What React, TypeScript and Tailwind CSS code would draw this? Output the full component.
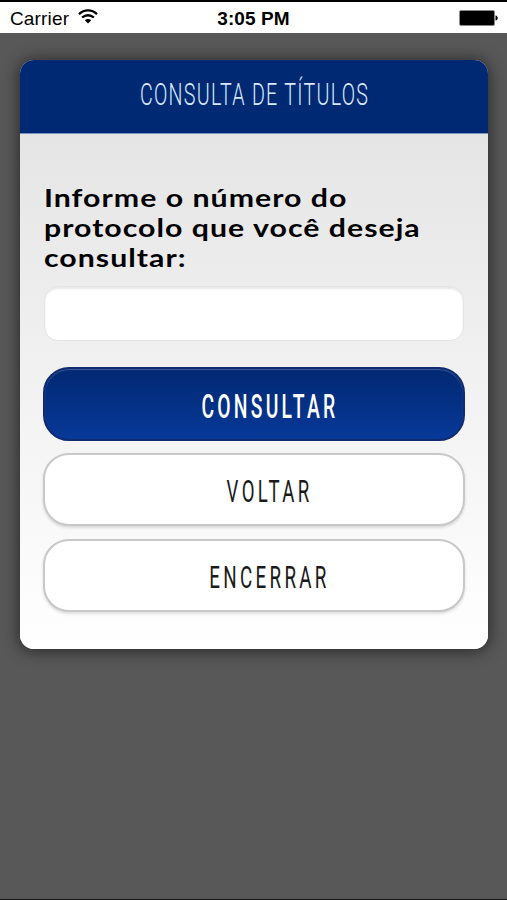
import clsx from 'clsx'

const label = ['Informe o número do', 'protocolo que você deseja', 'consultar:']

const actions = [
  {
    text: 'CONSULTAR',
    box: 'h-[74px] mb-3 border-[#102b70] bg-linear-to-b from-[#022872] to-[#073999] text-white shadow-[inset_0_1px_1px_#3d5d9b]',
    type: 'pt-px text-[33px] font-medium tracking-[5.5px] scale-x-[0.585]',
  },
  {
    text: 'VOLTAR',
    box: 'h-[73px] mb-[13px] border-[#c8c8c8] bg-white text-[#1a1a1a] shadow-[0_2px_3px_#00000020]',
    type: 'text-[31px] font-normal tracking-[5.5px] scale-x-[0.6]',
  },
  {
    text: 'ENCERRAR',
    box: 'h-[73px] border-[#c8c8c8] bg-white text-[#1a1a1a] shadow-[0_2px_3px_#00000020]',
    type: 'text-[31px] font-normal tracking-[5.5px] scale-x-[0.605]',
  },
] as const

function StatusBar() {
  return (
    <div className="h-[33px] shrink-0 grid grid-cols-3 items-center border-t-2 border-black bg-white px-[10px] font-['Liberation_Sans',sans-serif] text-black">
      <div className="flex items-center gap-[9px]">
        <span className="pt-0.5 text-[19px] leading-none tracking-[0.15px]">Carrier</span>
        <svg className="-mt-0.5" width="20" height="15" viewBox="0 0 20 15" fill="none" stroke="currentColor" strokeWidth="2.3">
          <path d="M1 5.1C6.2.2 13.8.2 19 5.1" />
          <path d="M4.1 8.5c3.4-3 8.4-3 11.8 0" />
          <path d="M10 14.6 6.8 11.2c1.8-1.6 4.6-1.6 6.4 0Z" fill="currentColor" stroke="none" />
        </svg>
      </div>
      <span className="justify-self-center pt-0.5 text-[19px] leading-none font-bold tracking-[0.1px]">
        3:05 PM
      </span>
      <svg className="-mr-px justify-self-end" width="39" height="16" viewBox="0 0 39 16">
        <rect x=".5" y=".5" width="35" height="15" rx="1.5" fill="black" stroke="#888" />
        <path d="M36.5 5.5c3 .5 3 4.5 0 5Z" fill="black" />
      </svg>
    </div>
  )
}

export default function App() {
  return (
    <div className="h-[900px] w-[507px] flex flex-col overflow-hidden border-b border-[#171717] bg-[#585858]">
      <StatusBar />
      <main className="mt-[27px] ml-5 h-[589px] w-[468px] shrink-0 flex flex-col overflow-hidden rounded-[14px] bg-white shadow-[0_1px_15px_2px_#00000080]">
        <header className="h-[73px] shrink-0 flex items-center justify-center bg-[#002973] pb-1 pl-px font-[Roboto,sans-serif] text-[#dce8ff]">
          <h1 className="scale-x-[0.635] text-[31px] leading-none font-[350] tracking-[2px] whitespace-nowrap">
            CONSULTA DE TÍTULOS
          </h1>
        </header>
        <form className="flex-1 border-t border-[#7892be] bg-linear-to-b from-[#e5e5e5] to-white px-[23px] pt-12">
          <label htmlFor="protocolo" className="block pl-px font-[Lato,sans-serif] text-[25px] leading-[30px] font-bold text-black">
            {label.map((line) => (
              <span key={line} className="block origin-left scale-x-[1.21] tracking-[0.85px] whitespace-nowrap">
                {line}
              </span>
            ))}
          </label>
          <input
            id="protocolo"
            className="mx-px mt-[14px] block h-[55px] w-[420px] rounded-[14px] border border-[#e4e4e4] bg-white shadow-[inset_0_2px_2px_#00000018] outline-none"
          />
          <div className="mt-[26px] w-[422px] flex flex-col">
            {actions.map(({ text, box, type }) => (
              <button
                key={text}
                type="button"
                className={clsx('flex items-center justify-center rounded-[26px] border-2 pt-[3px] pl-[31px] font-[Roboto,sans-serif]', box)}
              >
                <span className={clsx('leading-none whitespace-nowrap', type)}>{text}</span>
              </button>
            ))}
          </div>
        </form>
      </main>
    </div>
  )
}
